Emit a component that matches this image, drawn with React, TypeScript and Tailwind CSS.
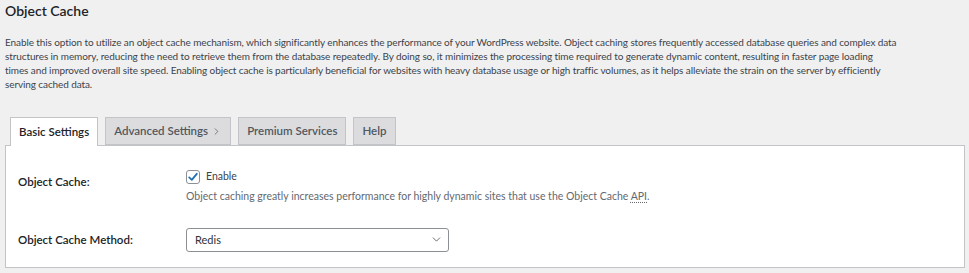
import { ChevronDown, ChevronRight } from "lucide-react";

const font = "font-['Segoe_UI','Lato',sans-serif]";

function Tab({ label, active, chevron }: { label: string; active?: boolean; chevron?: boolean }) {
  return (
    <div
      className={
        active
          ? "h-[29px] -mb-px flex items-center px-[8px] border border-[#c3c4c7] border-b-0 bg-white text-[#1d2327] text-[11.5px] font-semibold"
          : "h-[28px] flex items-center px-[8px] border border-[#c3c4c7] bg-[#dcdcde] text-[#50575e] text-[11.5px] font-semibold"
      }
    >
      {label}
      {chevron && <ChevronRight size={11} strokeWidth={1.6} className="ml-[3px]" />}
    </div>
  );
}

export default function App() {
  return (
    <div className={`${font} bg-[#f0f0f1] w-[969px] h-[273px] overflow-hidden text-[#3c434a]`}>
      <div className="px-[5px]">
        <h2 className="pt-[1px] text-[14px] leading-[20px] font-semibold text-[#1d2327]">Object Cache</h2>
        <div className="mt-[14px] text-[10px] tracking-[-0.1px] leading-[14px] whitespace-nowrap">
          <p>Enable this option to utilize an object cache mechanism, which significantly enhances the performance of your WordPress website. Object caching stores frequently accessed database queries and complex data</p>
          <p>structures in memory, reducing the need to retrieve them from the database repeatedly. By doing so, it minimizes the processing time required to generate dynamic content, resulting in faster page loading</p>
          <p>times and improved overall site speed. Enabling object cache is particularly beneficial for websites with heavy database usage or high traffic volumes, as it helps alleviate the strain on the server by efficiently</p>
          <p>serving cached data.</p>
        </div>

        <div className="mt-[26px] pl-[5px] flex gap-[7px] items-end">
          <Tab label="Basic Settings" active />
          <Tab label="Advanced Settings" chevron />
          <Tab label="Premium Services" />
          <Tab label="Help" />
        </div>

        <div className="w-[960px] h-[123px] bg-white border border-[#c3c4c7] pl-[12px]">
          <div className="flex pt-[23px]">
            <div className="w-[168px] pt-[4px] text-[11.5px] font-semibold text-[#1d2327]">Object Cache:</div>
            <div>
              <label className="flex items-center gap-[6px] text-[10.5px] text-[#3c434a]">
                <span className="w-[14px] h-[14px] rounded-[3px] border border-[#8c8f94] bg-white flex items-center justify-center">
                  <svg width="12" height="12" viewBox="0 0 12 12" fill="none">
                    <path d="M2.2 6.4 L4.8 8.8 L9.8 2.8" stroke="#2271b1" strokeWidth="1.8" strokeLinecap="round" strokeLinejoin="round" />
                  </svg>
                </span>
                Enable
              </label>
              <p className="mt-[4px] text-[10.5px] leading-[14px] text-[#646970]">
                Object caching greatly increases performance for highly dynamic sites that use the Object Cache{" "}
                <abbr title="Application Programming Interface" className="underline decoration-dotted underline-offset-2">API</abbr>.
              </p>
            </div>
          </div>

          <div className="flex items-center mt-[25px]">
            <div className="w-[168px] text-[11.5px] font-semibold text-[#1d2327]">Object Cache Method:</div>
            <div className="w-[263px] h-[24px] rounded-[3px] border border-[#8c8f94] bg-white flex items-center justify-between pl-[8px] pr-[5px] text-[11px] text-[#2c3338]">
              <span>Redis</span>
              <ChevronDown size={13} strokeWidth={1.6} className="text-[#50575e]" />
            </div>
          </div>
        </div>
      </div>
    </div>
  );
}
